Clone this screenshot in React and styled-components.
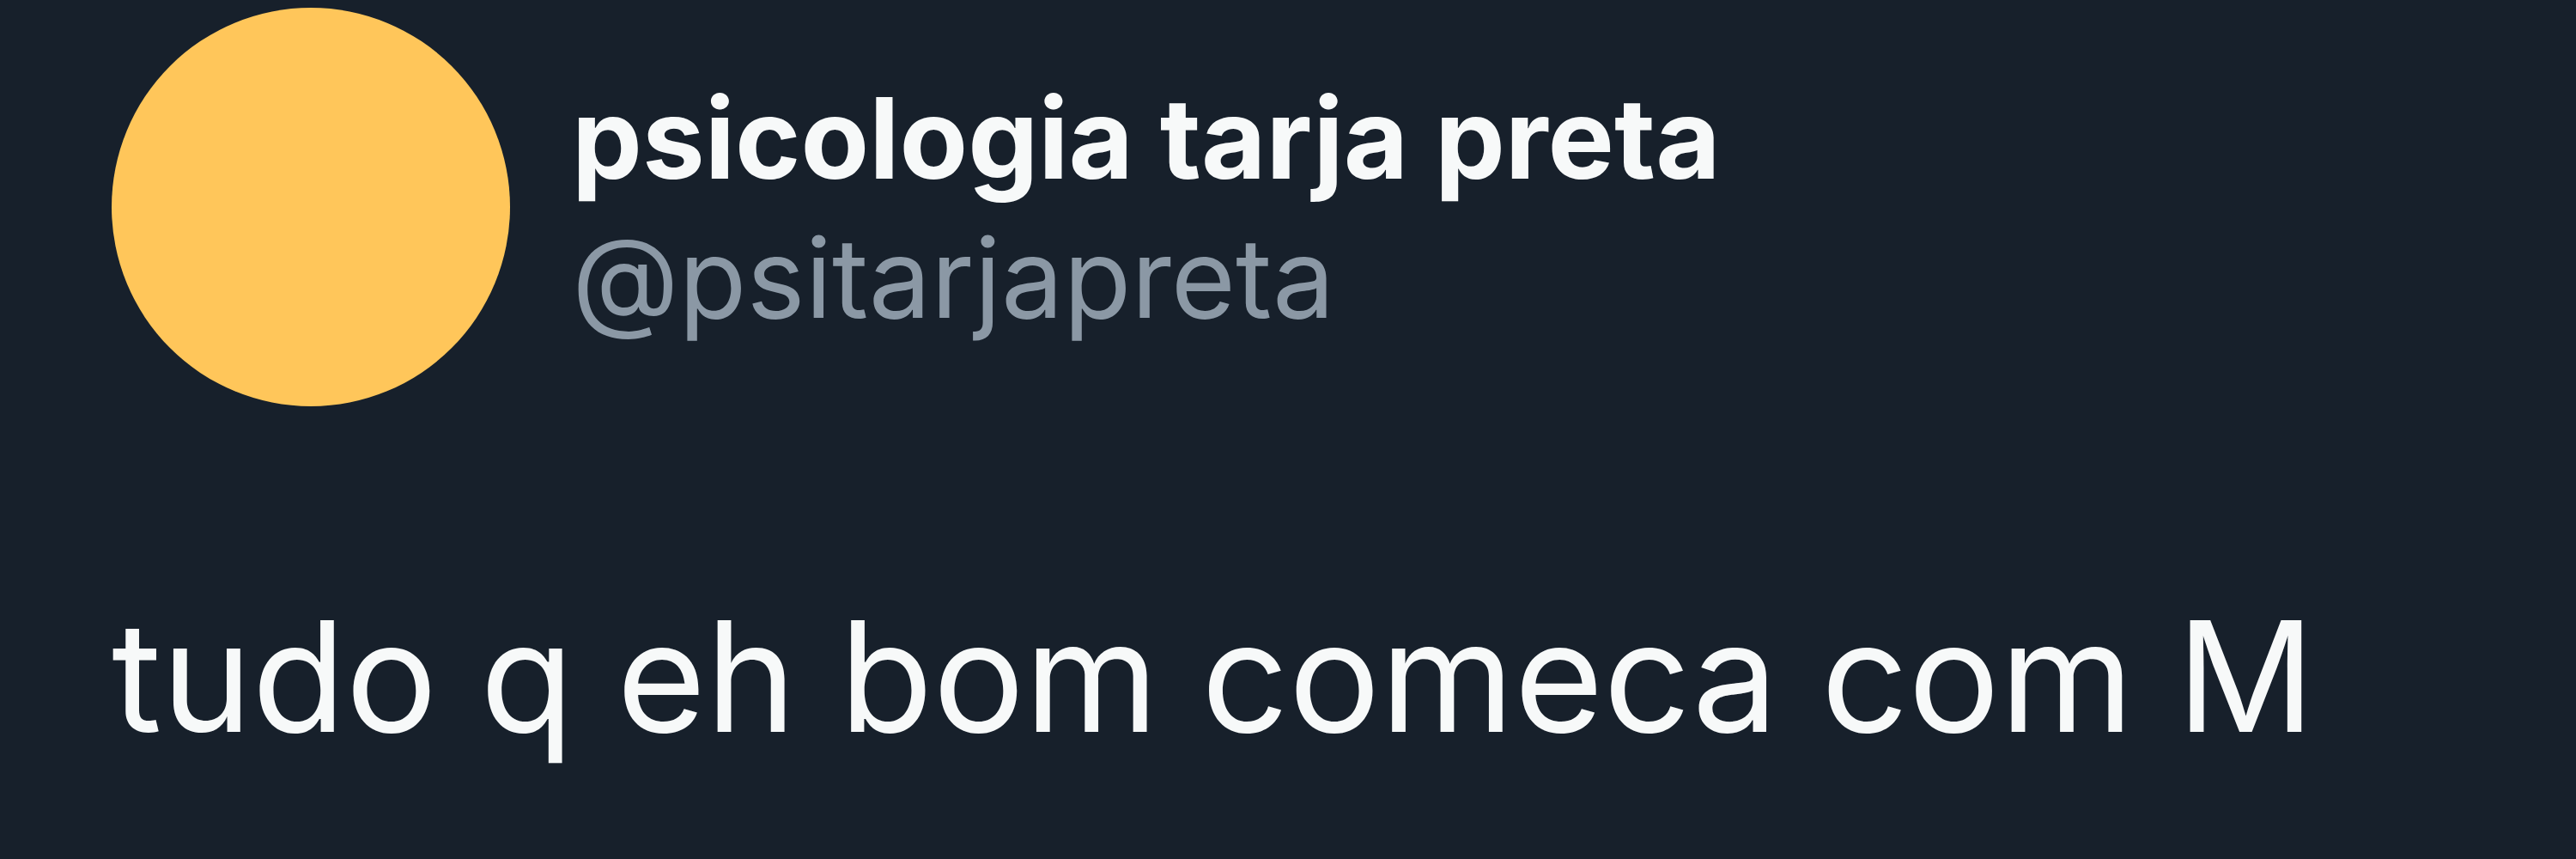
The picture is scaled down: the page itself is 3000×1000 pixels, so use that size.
import React from "react";
import styled, { createGlobalStyle } from "styled-components";

const GlobalStyle = createGlobalStyle`
  html, body {
    margin: 0;
    padding: 0;
    background-color: #17202b;
  }
  #root {
    min-height: 1000px;
  }
`;

const Tweet = styled.article`
  box-sizing: border-box;
  width: 3000px;
  height: 1000px;
  padding: 9px 0 0 130px;
  background-color: #17202b;
  font-family: Inter, "Noto Sans", sans-serif;
  overflow: hidden;
`;

const Header = styled.header`
  display: flex;
  align-items: flex-start;
  gap: 72px;
`;

const Avatar = styled.div`
  flex: none;
  width: 464px;
  height: 464px;
  border-radius: 50%;
  background-color: #ffc65a;
`;

const Names = styled.div`
  display: flex;
  flex-direction: column;
  padding-top: 87px;
`;

const DisplayName = styled.div`
  font-size: 130px;
  line-height: 1;
  font-weight: 700;
  color: #f7f9f9;
  white-space: nowrap;
`;

const Handle = styled.div`
  margin-top: 33px;
  font-size: 129px;
  line-height: 1;
  font-weight: 400;
  color: #8b98a5;
  white-space: nowrap;
`;

const Body = styled.p`
  margin: 226px 0 0;
  font-size: 178px;
  line-height: 1;
  font-weight: 400;
  color: #f7f9f9;
  white-space: nowrap;
`;

export default function App() {
  return (
    <>
      <GlobalStyle />
      <Tweet>
        <Header>
          <Avatar />
          <Names>
            <DisplayName>psicologia tarja preta</DisplayName>
            <Handle>@psitarjapreta</Handle>
          </Names>
        </Header>
        <Body>tudo q eh bom comeca com M</Body>
      </Tweet>
    </>
  );
}
